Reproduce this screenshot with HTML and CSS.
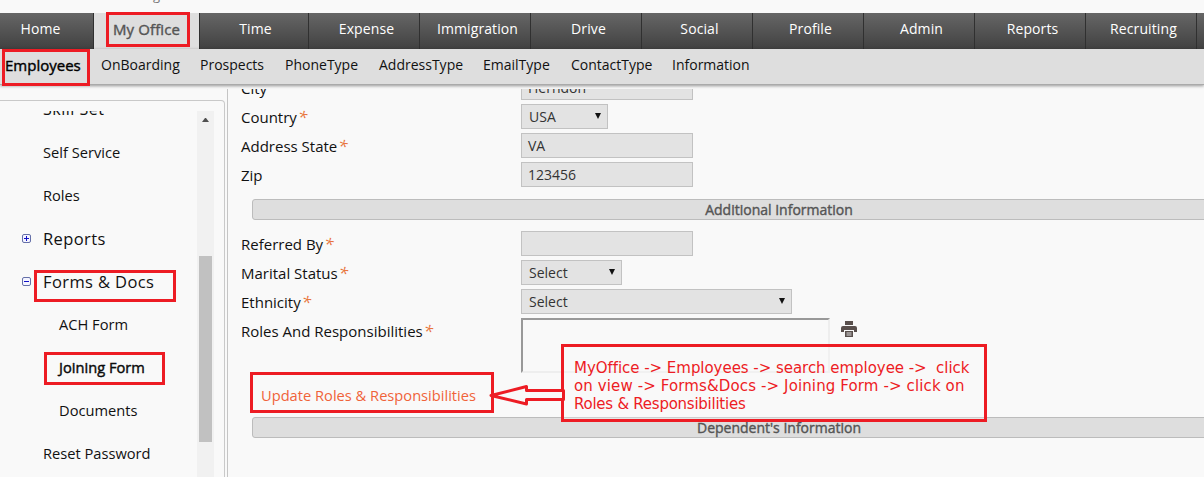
FILE: index.html
```html
<!DOCTYPE html>
<html lang="en">
<head>
<meta charset="utf-8">
<title>My Office - Employees</title>
<link rel="stylesheet" href="styles.css">
</head>
<body>
<div class="page">
  <header class="top"><span class="top-text">g</span></header>
  <nav class="tabs">
    <a class="tab first">Home</a><a class="tab active">My Office</a><a class="tab">Time</a><a class="tab">Expense</a><a class="tab">Immigration</a><a class="tab">Drive</a><a class="tab">Social</a><a class="tab">Profile</a><a class="tab">Admin</a><a class="tab">Reports</a><a class="tab">Recruiting</a><a class="tab"></a>
  </nav>
  <nav class="subnav">
    <a class="current">Employees</a><a>OnBoarding</a><a>Prospects</a><a>PhoneType</a><a>AddressType</a><a>EmailType</a><a>ContactType</a><a>Information</a>
  </nav>
  <main class="main">
    <aside class="sidebar">
      <div class="panel">
        <ul class="menu">
          <li class="wide">Skill Set</li>
          <li>Self Service</li>
          <li>Roles</li>
          <li class="group"><svg class="toggle" viewBox="0 0 9 9"><rect x=".5" y=".5" width="8" height="8" rx="1.5"/><path d="M2 4.5h5M4.5 2v5"/></svg>Reports</li>
          <li class="group"><svg class="toggle" viewBox="0 0 9 9"><rect x=".5" y=".5" width="8" height="8" rx="1.5"/><path d="M2 4.5h5"/></svg>Forms &amp; Docs</li>
          <li class="child">ACH Form</li>
          <li class="child selected">Joining Form</li>
          <li class="child">Documents</li>
          <li>Reset Password</li>
        </ul>
        <div class="scrollbar"><svg class="up" viewBox="0 0 7 4"><path d="M0 4h7L4 0H3z"/></svg><div class="thumb"></div></div>
      </div>
    </aside>
    <section class="content">
      <div class="row city"><label>City</label><div class="field">Herndon</div></div>
      <div class="row"><label>Country<i>*</i></label><div class="field select country">USA<span class="arrow"></span></div></div>
      <div class="row"><label>Address State<i>*</i></label><div class="field">VA</div></div>
      <div class="row"><label>Zip</label><div class="field">123456</div></div>
      <h2 class="band">Additional Information</h2>
      <div class="row"><label>Referred By<i>*</i></label><div class="field"></div></div>
      <div class="row"><label>Marital Status<i>*</i></label><div class="field select marital">Select<span class="arrow"></span></div></div>
      <div class="row"><label>Ethnicity<i>*</i></label><div class="field select ethnicity">Select<span class="arrow"></span></div></div>
      <div class="row roles"><label>Roles And Responsibilities<i>*</i></label><div class="textarea"></div>
        <svg class="printer" viewBox="0 0 16 16"><path d="M4 0h8v4H4zM2 5h12q2 0 2 2v4h-3V9H3v2H0V7q0-2 2-2z"/><path d="M4 10h8v6H4z"/><path class="paper" d="M5.5 11.5h5v1h-5zM5.5 13.5h5v1h-5z"/></svg>
      </div>
      <a class="update">Update Roles &amp; Responsibilities</a>
      <h2 class="band second">Dependent's Information</h2>
    </section>
  </main>
  <div class="mark mark-office"></div>
  <div class="mark mark-employees"></div>
  <div class="mark mark-forms"></div>
  <div class="mark mark-joining"></div>
  <div class="mark mark-update"></div>
  <div class="mark callout"><span class="l1">MyOffice -&gt; Employees -&gt; search employee -&gt;&nbsp; click</span><span class="l2">on view -&gt; Forms&amp;Docs -&gt; Joining Form -&gt; click on</span><span class="l3">Roles &amp; Responsibilities</span></div>
  <svg class="pointer" viewBox="0 0 80 24"><path d="M75.5 6.5H38.5V2.5L3 11.5L38.5 20V15.5H75.5Z"/></svg>
</div>
</body>
</html>
```

FILE: styles.css
```css
* { box-sizing: border-box; }
body { margin: 0; background: #f9f9f9; font: 14px/20px "Open Sans", sans-serif; color: #111; }
.page { position: relative; width: 1204px; height: 477px; overflow: hidden; display: flex; flex-direction: column; }
.top { height: 13px; flex: none; overflow: hidden; padding-left: 153px; font-size: 13px; color: #777; }
.top-text { display: block; margin-top: -15px; }
.tabs { display: flex; height: 36px; flex: none; background: #dedede; }
.tab { flex: none; width: 111px; padding: 6px 0 0 5px; text-align: center; color: #fff; font-size: 14px; letter-spacing: .1px; background: linear-gradient(#666, #414141); border-right: 1px solid #303030; }
.tab.first { width: 94px; padding: 6px 12px 0 0; }
.tab.active { width: 105px; background: #dedede; color: #555; border: 0; padding: 6px 0 0; font-size: 15px; -webkit-text-stroke: .4px #555; }
.tab:nth-child(3) { width: 110px; padding-left: 3px; border-left: 1px solid #303030; }
.subnav { height: 36px; flex: none; display: grid; grid-template-columns: 96px 99px 85px 94px 104px 88px 101px auto; padding: 6px 0 0 5px; background: #dedede; border-bottom: 1px solid #aaa; box-shadow: 0 1px 3px rgba(0,0,0,.4); z-index: 1; }
.subnav .current { font-size: 15px; color: #000; -webkit-text-stroke: .4px #000; }
.main { flex: 1; min-height: 0; display: flex; padding-top: 4px; }
.sidebar { width: 228px; flex: none; padding-top: 11px; border-right: 1px solid #c5c5c5; }
.panel { width: 225px; height: 500px; border: 1px solid #c9c9c9; border-left: 0; border-radius: 0 4px 0 0; padding-top: 10px; display: flex; }
.menu { list-style: none; margin: 0; padding: 0 0 0 43px; width: 197px; height: 366px; overflow: hidden; }
.menu li { height: 43px; line-height: 43px; white-space: nowrap; font-size: 14.67px; }
.menu .wide { margin-top: -23px; font-size: 16px; letter-spacing: .5px; }
.menu .group { margin-left: -21px; display: flex; align-items: center; font-size: 16.5px; line-height: 44px; letter-spacing: .4px; }
.toggle { width: 9px; height: 9px; margin-right: 12px; fill: #f4f4ff; stroke: #6570a8; }
.toggle path { stroke: #1111c8; }
.menu .child { padding-left: 16px; }
.menu .selected { -webkit-text-stroke: .4px #000; }
.scrollbar { width: 17px; height: 366px; background: #f1f1f1; padding: 7px 2px 0; }
.up { display: block; width: 7px; height: 4px; margin: 0 0 134px 3px; fill: #505050; }
.thumb { width: 13px; height: 186px; background: #c1c1c1; }
.content { flex: none; width: 1100px; padding-left: 13px; overflow: hidden; }
.row { display: flex; height: 25px; margin-bottom: 4px; line-height: 26px; }
.city { margin-top: -14px; }
.row label { width: 280px; font-size: 15px; }
.row i { color: #e8743b; font-size: 17px; line-height: 20px; margin-left: 1px; }
.field { width: 172px; height: 25px; background: #e3e3e3; border: 1px solid #c2c2c2; padding-left: 6px; line-height: 23px; color: #333; }
.select { position: relative; padding-left: 7px; }
.country { width: 87px; }
.marital { width: 101px; }
.ethnicity { width: 271px; }
.arrow { position: absolute; right: 6px; top: 8px; border: 3.5px solid transparent; border-top: 6px solid #111; border-bottom: 0; }
.band { margin: 12px 0 11px 11px; width: 1054px; height: 21px; background: #dedede; border: 1px solid #bcbcbc; border-radius: 3px; text-align: center; font-size: 14px; line-height: 20px; font-weight: 400; color: #555; -webkit-text-stroke: .4px #555; }
.roles { height: 55px; margin-bottom: 0; }
.textarea { width: 309px; height: 55px; border: 2px solid #eee; border-top-color: #999; border-left-color: #999; }
.printer { width: 16px; height: 16px; margin: 3px 0 0 11px; fill: #594f4c; }
.printer .paper { fill: #ddd; }
.update { display: block; width: 300px; margin: 12px 0 12px 20px; color: #f0633a; font-size: 14.67px; }
.band.second { margin-top: 0; }
.mark { position: absolute; border: 3px solid #ed1c24; z-index: 2; }
.mark-office { left: 106px; top: 12px; width: 84px; height: 35px; }
.mark-employees { left: 2px; top: 49px; width: 88px; height: 37px; }
.mark-forms { left: 34px; top: 270px; width: 142px; height: 32px; }
.mark-joining { left: 44px; top: 352px; width: 121px; height: 33px; }
.mark-update { left: 250px; top: 372px; width: 244px; height: 41px; }
.callout { left: 561px; top: 344px; width: 426px; height: 78px; padding: 12px 0 0 10px; background: rgba(249,249,249,.3); color: #ed1c24; font: 15px/18px "DejaVu Sans", sans-serif; display: flex; flex-direction: column; white-space: nowrap; }
.l1 { letter-spacing: -.04px; }
.l2 { letter-spacing: .12px; }
.l3 { letter-spacing: -.25px; }
.pointer { position: absolute; left: 488px; top: 384px; width: 80px; height: 24px; fill: #f9f9f9; stroke: #ed1c24; stroke-width: 3px; stroke-linejoin: round; z-index: 3; }
```
